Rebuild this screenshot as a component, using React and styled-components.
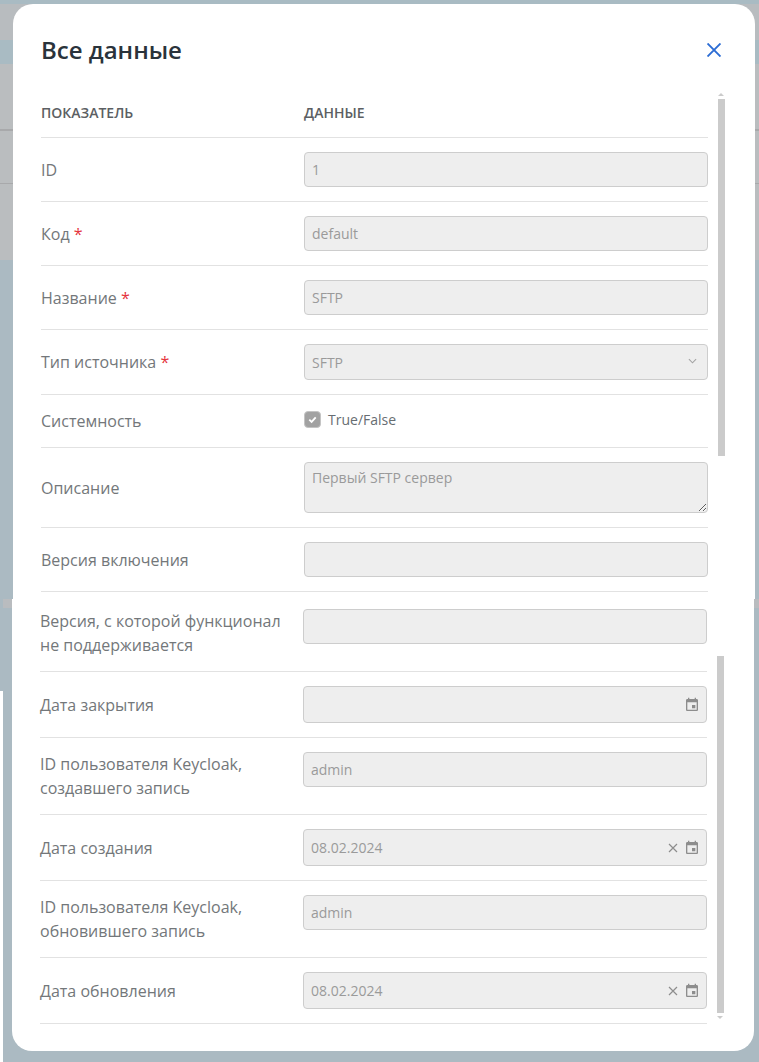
import styled, { createGlobalStyle } from 'styled-components';

const GlobalStyle = createGlobalStyle`
  html, body {
    margin: 0;
    padding: 0;
    background: #abbac2;
  }
  body {
    font-family: 'Open Sans', 'Liberation Sans', sans-serif;
  }
`;

const CalendarIcon = () => (
  <DateIcon viewBox="0 0 24 24">
    <path d="M17 12h-5v5h5v-5zM16 1v2H8V1H6v2H5c-1.11 0-1.99.9-1.99 2L3 19c0 1.1.89 2 2 2h14c1.1 0 2-.9 2-2V5c0-1.1-.9-2-2-2h-1V1h-2zm3 18H5V8h14v11z" />
  </DateIcon>
);

const ClearIcon = () => (
  <SmallCross viewBox="0 0 10 10">
    <path d="M1 1l8 8M9 1l-8 8" />
  </SmallCross>
);

const Chevron = () => (
  <ChevronIcon viewBox="0 0 10 6">
    <path d="M1 1l4 4 4-4" />
  </ChevronIcon>
);

function TextField({ value, height, kind }) {
  return (
    <Field $height={height}>
      <FieldInput disabled readOnly value={value} />
      {kind === 'select' && <Chevron />}
      {value && kind === 'date' && <ClearIcon />}
      {kind === 'date' && <CalendarIcon />}
    </Field>
  );
}

function DataRow({ label, required, height, top, lift, children }) {
  return (
    <Row $height={height} $lift={lift}>
      <LabelText>
        {label}
        {required && <Star> *</Star>}
      </LabelText>
      <Control $top={top}>{children}</Control>
    </Row>
  );
}

export default function App() {
  return (
    <Page>
      <GlobalStyle />
      <UpperPanel>
        <Header>
          <Title>Все данные</Title>
          <CloseButton aria-label="Закрыть">
            <svg viewBox="0 0 14 14" width="14" height="14">
              <path d="M0.5 0.5l13 13M13.5 0.5l-13 13" stroke="#2b6cd4" strokeWidth="1.9" fill="none" />
            </svg>
          </CloseButton>
        </Header>
        <HeadRow>
          <HeadCell>Показатель</HeadCell>
          <HeadCell>Данные</HeadCell>
        </HeadRow>
        <DataRow label="ID" height={64}>
          <TextField value="1" />
        </DataRow>
        <DataRow label="Код" required height={64}>
          <TextField value="default" />
        </DataRow>
        <DataRow label="Название" required height={64}>
          <TextField value="SFTP" />
        </DataRow>
        <DataRow label="Тип источника" required height={65}>
          <TextField value="SFTP" height={36} kind="select" />
        </DataRow>
        <DataRow label="Системность" height={53} top={14}>
          <CheckLine>
            <CheckBox>
              <svg viewBox="0 0 12 12" width="11" height="11">
                <path d="M2.5 6.2l2.5 2.4 4.5-5" stroke="#fff" strokeWidth="2" fill="none" />
              </svg>
            </CheckBox>
            True/False
          </CheckLine>
        </DataRow>
        <DataRow label="Описание" height={80}>
          <TextArea disabled readOnly value="Первый SFTP сервер" />
        </DataRow>
        <DataRow label="Версия включения" height={64}>
          <TextField value="" />
        </DataRow>
        <UpperThumb />
        <ArrowUp />
      </UpperPanel>

      <LowerPanel>
        <DataRow label="Версия, с которой функционал не поддерживается" height={73} top={10} lift={4}>
          <TextField value="" />
        </DataRow>
        <DataRow label="Дата закрытия" height={66}>
          <TextField value="" height={37} kind="date" />
        </DataRow>
        <DataRow label="ID пользователя Keycloak, создавшего запись" height={77}>
          <TextField value="admin" />
        </DataRow>
        <DataRow label="Дата создания" height={66}>
          <TextField value="08.02.2024" height={37} kind="date" />
        </DataRow>
        <DataRow label="ID пользователя Keycloak, обновившего запись" height={77}>
          <TextField value="admin" />
        </DataRow>
        <DataRow label="Дата обновления" height={66}>
          <TextField value="08.02.2024" height={37} kind="date" />
        </DataRow>
        <LowerThumb />
        <ArrowDown />
      </LowerPanel>

      <SeamLeft />
      <SeamRight />
      <EdgeStrip />
    </Page>
  );
}

const Page = styled.div`
  position: relative;
  height: 1062px;
  overflow: hidden;
  padding-top: 4px;
  box-sizing: border-box;
  background: linear-gradient(
    to bottom,
    #a9bbc3 0 4px,
    #b8bcbf 4px 40px,
    #a9bbc3 40px 64px,
    #babdbf 64px 129px,
    #a8a9ab 129px 131px,
    #babdbf 131px 183px,
    #a8a9ab 183px 184px,
    #babdbf 184px 260px,
    #abbac2 260px
  );
`;

const UpperPanel = styled.section`
  position: relative;
  box-sizing: border-box;
  width: 742px;
  height: 595px;
  margin-left: 13px;
  padding: 0 47px 0 28px;
  background: #fff;
  border-radius: 20px 20px 0 0;
`;

const LowerPanel = styled.section`
  position: relative;
  box-sizing: border-box;
  width: 742px;
  height: 452px;
  margin-left: 12px;
  padding: 0 47px 0 28px;
  background: #fff;
  border-radius: 0 0 20px 20px;
`;

const Header = styled.header`
  display: flex;
  align-items: center;
  justify-content: space-between;
  height: 92px;
`;

const Title = styled.h2`
  margin: 0;
  font-size: 24px;
  font-weight: 600;
  line-height: 32px;
  color: #2a333b;
`;

const CloseButton = styled.button`
  display: flex;
  margin: 0 -13px 0 0;
  padding: 0;
  border: 0;
  background: none;
`;

const HeadRow = styled.div`
  display: grid;
  grid-template-columns: 263px 1fr;
  box-sizing: border-box;
  height: 42px;
  padding-top: 8px;
  border-bottom: 1px solid #e2e2e2;
`;

const HeadCell = styled.div`
  font-size: 14px;
  font-weight: 600;
  line-height: 18px;
  text-transform: uppercase;
  color: #5c5f63;
`;

const Row = styled.div`
  display: grid;
  grid-template-columns: 263px 1fr;
  box-sizing: border-box;
  height: ${(p) => p.$height}px;
  align-items: center;
  padding-bottom: ${(p) => p.$lift ?? 0}px;
  border-bottom: 1px solid #e2e2e2;
`;

const LabelText = styled.div`
  font-size: 16px;
  line-height: 24px;
  color: #73777a;
`;

const Control = styled.div`
  align-self: start;
  padding-top: ${(p) => p.$top ?? 14}px;
`;

const Star = styled.span`
  color: #e5343d;
`;

const Field = styled.div`
  display: flex;
  align-items: center;
  box-sizing: border-box;
  height: ${(p) => p.$height ?? 35}px;
  padding: 0 8px 0 7px;
  gap: 6px;
  background: #eee;
  border: 1px solid #cdcdcd;
  border-radius: 4px;
`;

const FieldInput = styled.input`
  flex: 1;
  min-width: 0;
  padding: 0;
  border: 0;
  outline: 0;
  background: none;
  font: 14px 'Open Sans', sans-serif;
  color: #9a9a9a;
`;

const TextArea = styled.textarea`
  display: block;
  box-sizing: border-box;
  width: 100%;
  height: 51px;
  padding: 5px 7px;
  background: #eee;
  border: 1px solid #cdcdcd;
  border-radius: 4px;
  outline: 0;
  font: 14px/20px 'Open Sans', sans-serif;
  color: #9a9a9a;
`;

const DateIcon = styled.svg`
  width: 16px;
  height: 16px;
  fill: #8d8d8d;
  flex: none;
  margin-right: -2px;
`;

const SmallCross = styled.svg`
  width: 10px;
  height: 10px;
  flex: none;
  fill: none;
  stroke: #8d8d8d;
  stroke-width: 1.2;
`;

const ChevronIcon = styled.svg`
  width: 9px;
  height: 6px;
  flex: none;
  margin: -2px 2px 0 0;
  fill: none;
  stroke: #a3a3a3;
  stroke-width: 1.2;
`;

const CheckLine = styled.label`
  display: flex;
  align-items: center;
  gap: 7px;
  height: 20px;
  font-size: 14px;
  color: #676d72;
`;

const CheckBox = styled.span`
  display: flex;
  align-items: center;
  justify-content: center;
  width: 17px;
  height: 17px;
  background: #a2a2a2;
  border: 1px solid #c4c4c4;
  border-radius: 4px;
  box-sizing: border-box;
`;

const UpperThumb = styled.div`
  position: absolute;
  left: 705px;
  top: 95px;
  width: 7px;
  height: 357px;
  background: #cbcbcb;
`;

const LowerThumb = styled.div`
  position: absolute;
  left: 705px;
  top: 57px;
  width: 7px;
  height: 357px;
  background: #cbcbcb;
`;

const ArrowUp = styled.div`
  position: absolute;
  left: 705px;
  top: 89px;
  width: 0;
  height: 0;
  border-left: 3.5px solid transparent;
  border-right: 3.5px solid transparent;
  border-bottom: 3px solid #cbcbcb;
`;

const ArrowDown = styled.div`
  position: absolute;
  left: 705px;
  top: 417px;
  width: 0;
  height: 0;
  border-left: 3.5px solid transparent;
  border-right: 3.5px solid transparent;
  border-top: 3px solid #cbcbcb;
`;

const SeamLeft = styled.div`
  position: absolute;
  left: 3px;
  top: 599px;
  width: 9px;
  height: 9px;
  background: #b9bcbf;
`;

const SeamRight = styled.div`
  position: absolute;
  left: 754px;
  top: 599px;
  width: 5px;
  height: 9px;
  background: #b9bcbf;
`;

const EdgeStrip = styled.div`
  position: absolute;
  left: 0;
  top: 691px;
  bottom: 0;
  width: 3px;
  background: #fff;
`;
